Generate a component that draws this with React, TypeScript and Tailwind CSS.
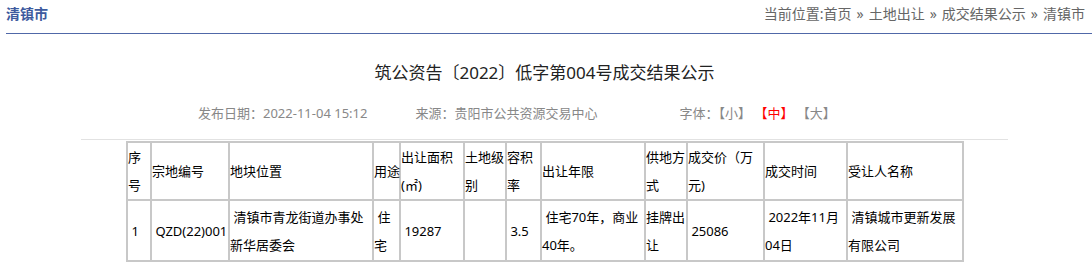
const font = { fontFamily: '"Noto Sans", "Noto Sans CJK SC", sans-serif' }

const cols = [24, 78, 144, 27, 64, 42, 35, 104, 42, 77, 83, 116]

const head = [
  <>序<br />号</>,
  "宗地编号",
  "地块位置",
  <span className="whitespace-nowrap">用途</span>,
  <>出让面积<br />(㎡)</>,
  <>土地级<br />别</>,
  <>容积<br />率</>,
  "出让年限",
  <>供地方<br />式</>,
  <>成交价（万<br />元)</>,
  "成交时间",
  "受让人名称",
]

const row = [
  "\u00a01",
  "\u00a0QZD(22)001",
  <>{"\u00a0清镇市青龙街道办事处"}<br />新华居委会</>,
  <>{"\u00a0住"}<br />宅</>,
  "\u00a019287",
  "",
  "\u00a03.5",
  <>{"\u00a0住宅70年，商业"}<br />40年。</>,
  <>挂牌出<br />让</>,
  "\u00a025086",
  <>{"\u00a02022年11月"}<br />04日</>,
  <>{"\u00a0清镇城市更新发展"}<br />有限公司</>,
]

const crumbs = ["首页", "土地出让", "成交结果公示", "清镇市"]

export default function App() {
  return (
    <div className="w-[1092px] h-[265px] bg-white overflow-hidden" style={font}>
      {/* top bar */}
      <div className="ml-[6px] h-[34px] flex items-start justify-between pt-[4px] pr-[7px] border-b border-[#5068a8]">
        <span className="text-[14px] leading-[20px] font-bold text-[#3d5a9e]">清镇市</span>
        <span className="text-[14px] leading-[20px] text-[#666]">
          当前位置:
          {crumbs.map((c, i) => (
            <span key={c}>
              {i > 0 && <span className="px-[5px]">»</span>}
              {c}
            </span>
          ))}
        </span>
      </div>

      <div className="ml-[81px] w-[927px]">
        <h1 className="mt-[27px] text-center text-[17px] leading-[24px] text-[#222]">
          筑公资告〔2022〕低字第004号成交结果公示
        </h1>

        <div className="mt-[18px] flex pl-[117px] text-[13px] leading-[20px] text-[#888]">
          <span>发布日期：2022-11-04 15:12</span>
          <span className="ml-[48px]">来源：贵阳市公共资源交易中心</span>
          <span className="ml-[82px]">
            字体：【小】 <span className="text-[#f00]">【中】</span> 【大】
          </span>
        </div>

        <div className="mt-[16px] border-t border-[#e2e2e2]" />

        <table
          className="ml-[45px] mt-[1px] table-fixed border-separate border-spacing-0 border border-[#c8c8c8] text-[13px] leading-[28px] text-black"
          style={{ width: 837 }}
        >
          <colgroup>
            {cols.map((w, i) => (
              <col key={i} style={{ width: w }} />
            ))}
          </colgroup>
          <tbody>
            <tr>
              {head.map((h, i) => (
                <td key={i} className="border border-[#c8c8c8] p-0 align-middle h-[58px]">
                  {h}
                </td>
              ))}
            </tr>
            <tr>
              {row.map((h, i) => (
                <td key={i} className="border border-[#c8c8c8] p-0 align-middle h-[61px]">
                  {h}
                </td>
              ))}
            </tr>
          </tbody>
        </table>
      </div>
    </div>
  )
}
